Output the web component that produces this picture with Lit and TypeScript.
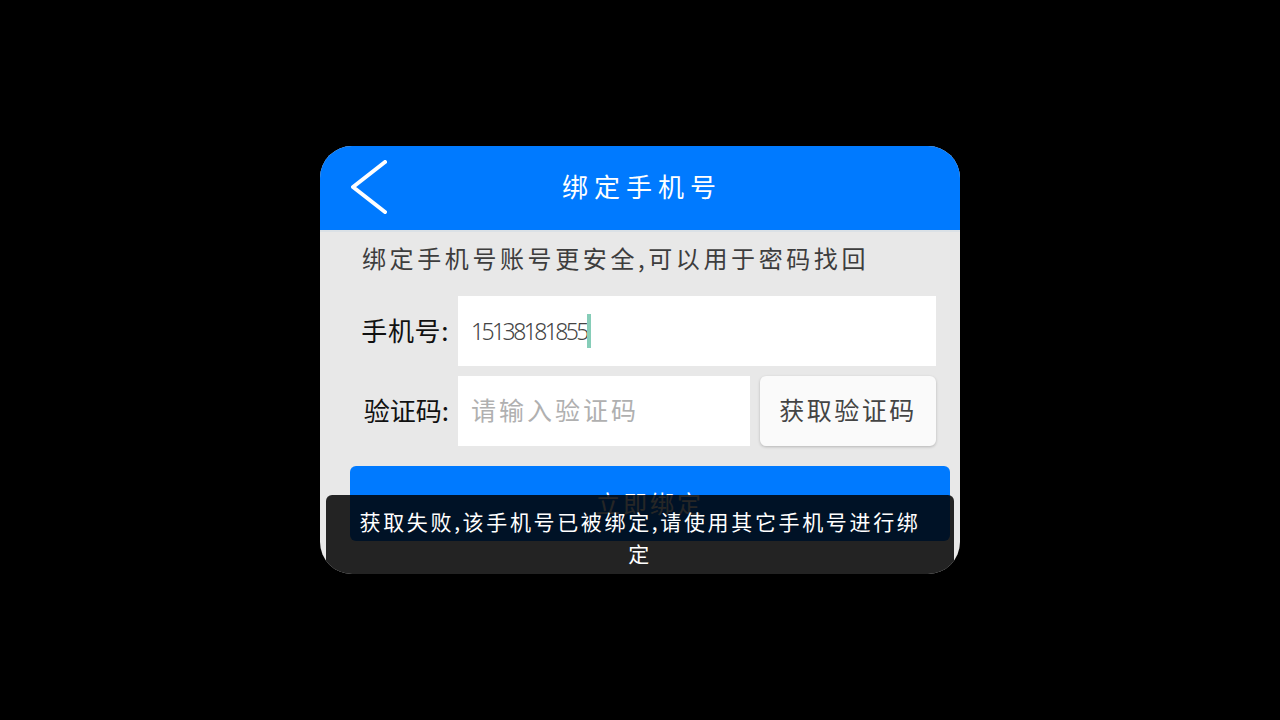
import { LitElement, html, css } from "lit";
import { customElement } from "lit/decorators.js";

@customElement("app-root")
export class AppRoot extends LitElement {
  static styles = css`
    :host {
      display: flex;
      align-items: flex-start;
      justify-content: center;
      width: 1280px;
      height: 720px;
      padding-top: 146px;
      box-sizing: border-box;
      background: #000;
      font-family: "Noto Sans CJK SC", "Noto Sans", sans-serif;
    }
    .card {
      position: relative;
      width: 640px;
      height: 428px;
      border-radius: 32px;
      overflow: hidden;
      background: #e8e8e8;
    }
    .header {
      display: flex;
      align-items: center;
      height: 84px;
      position: relative;
      justify-content: center;
      background: #007aff;
      border-bottom: 2px solid #dbe1e6;
    }
    .back {
      position: absolute;
      left: 29px;
      top: 13px;
      width: 40px;
      height: 58px;
      filter: blur(0.6px);
    }
    .title {
      color: #fff;
      font-size: 26px;
      line-height: 36px;
      letter-spacing: 6px;
      margin: 0 0 4px 4px;
      font-weight: 400;
    }
    .tip {
      color: #3d3d3d;
      font-size: 24px;
      line-height: 32px;
      letter-spacing: 3.6px;
      padding: 10px 0 0 42px;
      font-weight: 400;
      height: 54px;
      box-sizing: border-box;
      margin-bottom: 10px;
      white-space: nowrap;
    }
    .rows {
      display: flex;
      flex-direction: column;
      gap: 10px;
      padding: 0 24px 0 0;
    }
    .row {
      display: flex;
      height: 70px;
    }
    .label {
      width: 129px;
      flex: none;
      margin-right: 9px;
      text-align: right;
      color: #111;
      font-size: 26px;
      line-height: 68px;
      white-space: nowrap;
      font-weight: 400;
    }
    .label.wide {
      letter-spacing: 0.6px;
    }
    .input {
      flex: 1;
      display: flex;
      align-items: center;
      background: #fff;
      padding-left: 13px;
      min-width: 0;
    }
    .phone {
      font-family: "Noto Sans", sans-serif;
      font-size: 23px;
      font-weight: 300;
      color: #444;
      letter-spacing: -2.6px;
    }
    .caret {
      width: 4px;
      height: 34px;
      background: #86cdb8;
    }
    .placeholder {
      color: #b0b0b0;
      font-size: 25px;
      line-height: 32px;
      letter-spacing: 3px;
      font-weight: 400;
      margin-bottom: 4px;
      white-space: nowrap;
    }
    .send {
      width: 176px;
      flex: none;
      margin-left: 10px;
      display: flex;
      align-items: center;
      justify-content: center;
      padding-bottom: 4px;
      box-sizing: border-box;
      background: #fafafa;
      border-radius: 6px;
      box-shadow: 0 1px 3px rgba(0, 0, 0, 0.22);
      color: #444;
      font-size: 25px;
      letter-spacing: 2.5px;
      font-weight: 400;
      white-space: nowrap;
    }
    .submit {
      display: flex;
      justify-content: center;
      margin: 20px 10px 0 30px;
      height: 75px;
      padding-top: 19px;
      box-sizing: border-box;
      background: #007aff;
      border-radius: 6px;
      color: #fff;
      font-size: 24px;
      line-height: 36px;
      letter-spacing: 3px;
      font-weight: 400;
    }
    .toast {
      position: absolute;
      left: 6px;
      right: 6px;
      top: 349px;
      height: 79px;
      box-sizing: border-box;
      padding: 10px 28px 0;
      border-radius: 6px 6px 0 0;
      background: rgba(0, 0, 0, 0.85);
      color: #fff;
      font-size: 21px;
      line-height: 32px;
      letter-spacing: 2.65px;
      text-align: center;
      font-weight: 400;
      word-break: break-all;
    }
  `;

  render() {
    return html`
      <div class="card">
        <div class="header">
          <svg class="back" viewBox="0 0 40 58" fill="none">
            <polyline
              points="36,3 4,28 36,53"
              stroke="#fff"
              stroke-width="4"
              stroke-linecap="round"
              stroke-linejoin="round"
            />
          </svg>
          <div class="title">绑定手机号</div>
        </div>
        <div class="tip">绑定手机号账号更安全,可以用于密码找回</div>
        <div class="rows">
          <div class="row">
            <div class="label wide">手机号:</div>
            <div class="input">
              <span class="phone">15138181855</span><span class="caret"></span>
            </div>
          </div>
          <div class="row">
            <div class="label">验证码:</div>
            <div class="input"><span class="placeholder">请输入验证码</span></div>
            <div class="send">获取验证码</div>
          </div>
        </div>
        <div class="submit">立即绑定</div>
        <div class="toast">获取失败,该手机号已被绑定,请使用其它手机号进行绑定</div>
      </div>
    `;
  }
}
